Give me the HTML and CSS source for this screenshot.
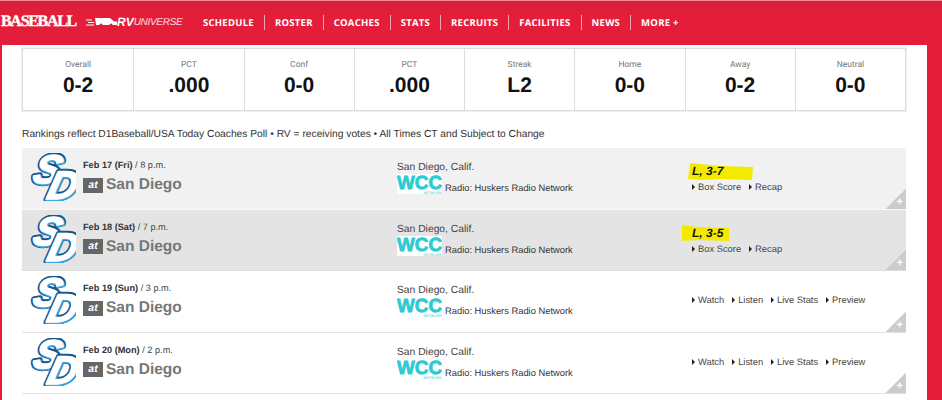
FILE: index.html
```html
<!DOCTYPE html>
<html lang="en">
<head>
  <meta charset="UTF-8">
  <title>Baseball Schedule</title>
  <link rel="stylesheet" href="styles.css">
</head>
<body>
  <!-- Shared logos -->
  <svg class="defs" width="0" height="0">
    <symbol id="sd-logo" viewBox="0 0 48 48">
      <g transform="skewX(-14)">
        <text class="sd-back" x="11" y="30">S</text>
        <text class="sd-shade" x="11.500" y="30.500">S</text>
        <text class="sd-front" x="10.500" y="29.500">S</text>
        <text class="sd-back" x="29" y="46">D</text>
        <text class="sd-shade" x="29.500" y="46.500">D</text>
        <text class="sd-front" x="28.500" y="45.500">D</text>
      </g>
    </symbol>
    <symbol id="wcc-logo" viewBox="0 0 45 20">
      <rect width="45" height="20" fill="#fff"/>
      <text class="wcc-mark" x="0" y="14.500" textLength="45" lengthAdjust="spacingAndGlyphs">WCC</text>
      <text class="wcc-sub" x="44.500" y="19.500" text-anchor="end">NETWORK</text>
    </symbol>
  </svg>

  <header class="topbar">
    <span class="sport">BASEBALL</span>
    <span class="sponsor">
      <svg width="31" height="10" viewBox="0 0 31 10">
        <path d="M0 3h6M2 5.500h6M0 8h8" stroke="#fff" stroke-width="1"/>
        <path d="M9 1h15l4 3.500h3V8H10z" fill="#fff"/>
        <circle cx="15" cy="8" r="1.600" fill="#e41e3a"/>
        <circle cx="25" cy="8" r="1.600" fill="#e41e3a"/>
      </svg>
      <b>RV</b><i>UNIVERSE</i>
    </span>
    <nav class="nav">
      <a>SCHEDULE</a>
      <a>ROSTER</a>
      <a>COACHES</a>
      <a>STATS</a>
      <a>RECRUITS</a>
      <a>FACILITIES</a>
      <a>NEWS</a>
      <a>MORE +</a>
    </nav>
  </header>

  <main class="content">
    <section class="stats">
      <div class="stat"><span>Overall</span><strong>0-2</strong></div>
      <div class="stat"><span>PCT</span><strong>.000</strong></div>
      <div class="stat"><span>Conf</span><strong>0-0</strong></div>
      <div class="stat"><span>PCT</span><strong>.000</strong></div>
      <div class="stat"><span>Streak</span><strong>L2</strong></div>
      <div class="stat"><span>Home</span><strong>0-0</strong></div>
      <div class="stat"><span>Away</span><strong>0-2</strong></div>
      <div class="stat"><span>Neutral</span><strong>0-0</strong></div>
    </section>

    <p class="note">Rankings reflect D1Baseball/USA Today Coaches Poll • RV = receiving votes • All Times CT and Subject to Change</p>

    <section class="games">
      <div class="game game-light">
        <svg class="team-logo"><use href="#sd-logo"/></svg>
        <div class="matchup">
          <div class="date"><b>Feb 17 (Fri)</b> / 8 p.m.</div>
          <div class="opponent"><span class="at">at</span> San Diego</div>
        </div>
        <div class="venue">
          <div class="place">San Diego, Calif.</div>
          <div class="radio"><svg class="wcc"><use href="#wcc-logo"/></svg>Radio: Huskers Radio Network</div>
        </div>
        <div class="result">
          <div class="score score-one">
            <svg class="marker" width="66" height="19" viewBox="0 0 66 19"><path d="M2 1l30 3 33 1-1 13-32-1-18 1-14-1z"/></svg>
            <span>L, 3-7</span>
          </div>
          <div class="links"><a>Box Score</a><a>Recap</a></div>
        </div>
        <span class="corner">+</span>
      </div>

      <div class="game game-dark">
        <svg class="team-logo"><use href="#sd-logo"/></svg>
        <div class="matchup">
          <div class="date"><b>Feb 18 (Sat)</b> / 7 p.m.</div>
          <div class="opponent"><span class="at">at</span> San Diego</div>
        </div>
        <div class="venue">
          <div class="place">San Diego, Calif.</div>
          <div class="radio"><svg class="wcc"><use href="#wcc-logo"/></svg>Radio: Huskers Radio Network</div>
        </div>
        <div class="result">
          <div class="score score-two">
            <svg class="marker" width="49" height="18" viewBox="0 0 49 18"><path d="M1 1l15 2 32 1v13l-30-1-17 1z"/></svg>
            <span>L, 3-5</span>
          </div>
          <div class="links"><a>Box Score</a><a>Recap</a></div>
        </div>
        <span class="corner">+</span>
      </div>

      <div class="game">
        <svg class="team-logo"><use href="#sd-logo"/></svg>
        <div class="matchup">
          <div class="date"><b>Feb 19 (Sun)</b> / 3 p.m.</div>
          <div class="opponent"><span class="at">at</span> San Diego</div>
        </div>
        <div class="venue">
          <div class="place">San Diego, Calif.</div>
          <div class="radio"><svg class="wcc"><use href="#wcc-logo"/></svg>Radio: Huskers Radio Network</div>
        </div>
        <div class="result">
          <div class="links"><a>Watch</a><a>Listen</a><a>Live Stats</a><a>Preview</a></div>
        </div>
        <span class="corner">+</span>
      </div>

      <div class="game">
        <svg class="team-logo"><use href="#sd-logo"/></svg>
        <div class="matchup">
          <div class="date"><b>Feb 20 (Mon)</b> / 2 p.m.</div>
          <div class="opponent"><span class="at">at</span> San Diego</div>
        </div>
        <div class="venue">
          <div class="place">San Diego, Calif.</div>
          <div class="radio"><svg class="wcc"><use href="#wcc-logo"/></svg>Radio: Huskers Radio Network</div>
        </div>
        <div class="result">
          <div class="links"><a>Watch</a><a>Listen</a><a>Live Stats</a><a>Preview</a></div>
        </div>
        <span class="corner">+</span>
      </div>
    </section>
  </main>
</body>
</html>
```

FILE: styles.css
```css
/* General styles */
html, body {
  margin: 0;
  padding: 0;
  height: 400px;
  overflow: hidden;
}
body {
  font-family: "Liberation Sans", Arial, sans-serif;
  background-color: #e41e3a;
  color: #333;
  text-rendering: geometricPrecision;
}
.defs {
  display: none;
}

/* Top bar */
.topbar {
  display: flex;
  align-items: center;
  box-sizing: border-box;
  height: 45px;
  padding: 0 0 2px 1px;
  border-top: 1px solid #ee8a98;
  background: linear-gradient(#d91f39, #e41e3a 14px);
  color: white;
}
.sport {
  width: 85px;
  font-family: "Liberation Serif", serif;
  font-weight: bold;
  font-size: 16px;
  letter-spacing: -1.3px;
  -webkit-text-stroke: 0.4px white;
}
.sponsor {
  display: flex;
  align-items: center;
  width: 117px;
}
.sponsor b {
  font-style: italic;
  font-size: 12px;
}
.sponsor i {
  font-size: 10px;
  letter-spacing: -0.3px;
  opacity: 0.85;
}
.nav {
  display: flex;
  font-family: "Open Sans", sans-serif;
  font-weight: 700;
  font-size: 9.5px;
  letter-spacing: 0.27px;
}
.nav a {
  padding: 0 10px;
  border-left: 1px solid #f3a3ae;
  line-height: 15px;
}
.nav a:first-child {
  padding-left: 0;
  border-left: none;
}

/* Content panel */
.content {
  margin: 0 15px 0 2px;
  height: 355px;
  padding: 3px 21px 0 20px;
  background-color: white;
}
.stats {
  display: grid;
  grid-template-columns: repeat(8, 1fr);
  height: 61px;
  border: 1px solid #ddd;
  box-shadow: 0 0 0 1px #f0f0f0;
}
.stat {
  display: flex;
  flex-direction: column;
  align-items: center;
  border-left: 1px solid #ddd;
}
.stat:first-child {
  border-left: none;
}
.stat span {
  margin-top: 11px;
  font-family: Roboto, sans-serif;
  font-size: 8.5px;
  color: #777;
}
.stat strong {
  margin-top: 4px;
  font-size: 21px;
  line-height: 24px;
  color: #111;
}
.note {
  margin: 17px 0 0;
  font-size: 10.26px;
  line-height: 13px;
  color: #333;
}

/* Game rows */
.games {
  margin-top: 7px;
}
.game {
  position: relative;
  display: flex;
  align-items: flex-start;
  height: 60.5px;
  border-bottom: 1px solid #e2e2e2;
  background-color: white;
}
.game-light {
  background-color: #f1f1f1;
  border-bottom-color: #f8f8f8;
}
.game-dark {
  background-color: #e4e4e4;
  border-bottom-color: #dcdcdc;
}
.team-logo {
  flex: none;
  width: 48px;
  height: 48px;
  margin: 5px 7px 0 6px;
}
.sd-back, .sd-shade, .sd-front {
  font-family: "Liberation Sans", sans-serif;
  font-weight: bold;
  font-style: italic;
  font-size: 40px;
  stroke-linejoin: round;
}
.sd-back {
  fill: #15578f;
  stroke: #15578f;
  stroke-width: 5.500px;
}
.sd-shade {
  fill: #3fa9e0;
  stroke: #3fa9e0;
  stroke-width: 2.500px;
}
.sd-front {
  fill: white;
  stroke: white;
  stroke-width: 1.500px;
}
.matchup {
  flex: none;
  width: 314px;
  padding-top: 11px;
}
.date {
  font-size: 9.2px;
  line-height: 12px;
  color: #444;
}
.date b {
  color: #333;
}
.opponent {
  display: flex;
  align-items: center;
  gap: 3px;
  margin-top: 6px;
  font-weight: bold;
  font-size: 15.5px;
  line-height: 16px;
  color: #777;
}
.at {
  width: 20px;
  height: 15px;
  background-color: #666;
  color: white;
  font-style: italic;
  font-size: 10.5px;
  line-height: 15px;
  text-align: center;
}
.venue {
  flex: none;
  width: 295px;
  padding-top: 14px;
}
.place {
  font-size: 10.3px;
  line-height: 12px;
  color: #444;
}
.radio {
  display: flex;
  align-items: flex-end;
  gap: 3px;
  font-size: 9.35px;
  line-height: 12px;
}
.wcc {
  width: 45px;
  height: 20px;
}
.wcc-mark {
  font-family: "Liberation Sans", sans-serif;
  font-weight: bold;
  font-size: 19px;
  fill: #2ccbd2;
  stroke: #2ccbd2;
  stroke-width: 0.8px;
}
.wcc-sub {
  font-family: "Liberation Sans", sans-serif;
  font-size: 3.500px;
  fill: #2ccbd2;
}
.result {
  padding-top: 14px;
}
.score {
  position: relative;
  height: 18px;
  font-weight: bold;
  font-style: italic;
  font-size: 12px;
  line-height: 18px;
  color: #111;
}
.score span {
  position: relative;
}
.marker {
  position: absolute;
  top: 0;
  fill: #f4ea00;
}
.score-one .marker {
  left: -4px;
}
.score-two .marker {
  left: -11px;
}
.links {
  display: flex;
  gap: 8px;
  margin-top: 1px;
  font-size: 9.35px;
  line-height: 12px;
  color: #444;
}
.links a::before {
  content: "";
  display: inline-block;
  margin-right: 3px;
  border-left: 3px solid #222;
  border-top: 3px solid transparent;
  border-bottom: 3px solid transparent;
}
.game:nth-child(n+3) .result {
  padding-top: 22px;
}
.corner {
  position: absolute;
  right: 0;
  bottom: 0;
  display: flex;
  align-items: flex-end;
  justify-content: flex-end;
  box-sizing: border-box;
  width: 20px;
  height: 21px;
  padding: 0 3px 1px 0;
  background: linear-gradient(to bottom right, transparent 50%, #ccc 50%);
  color: white;
  font-weight: bold;
  font-size: 11px;
  line-height: 11px;
}
```
